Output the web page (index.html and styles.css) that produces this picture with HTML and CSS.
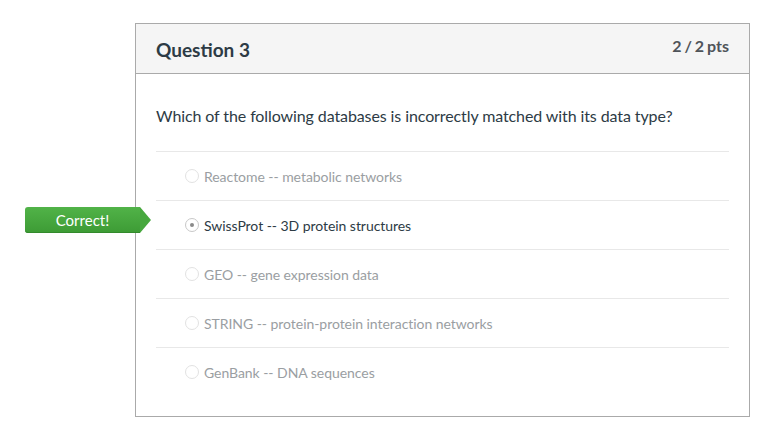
FILE: index.html
```html
<!DOCTYPE html>
<html>
<head>
<meta charset="utf-8">
<link rel="stylesheet" href="styles.css">
</head>
<body>
<div class="page">
  <div class="card">
    <div class="badge">Correct!</div>
    <div class="header">
      <h2 class="title">Question 3</h2>
      <div class="pts">2 / 2 pts</div>
    </div>
    <div class="body">
      <p class="question">Which of the following databases is incorrectly matched with its data type?</p>
      <div class="answers">
        <div class="answer"><span class="radio"></span><span class="label">Reactome -- metabolic networks</span></div>
        <div class="answer selected"><span class="radio"></span><span class="label">SwissProt -- 3D protein structures</span></div>
        <div class="answer"><span class="radio"></span><span class="label">GEO -- gene expression data</span></div>
        <div class="answer"><span class="radio"></span><span class="label">STRING -- protein-protein interaction networks</span></div>
        <div class="answer"><span class="radio"></span><span class="label">GenBank -- DNA sequences</span></div>
      </div>
    </div>
  </div>
</div>
</body>
</html>
```
FILE: styles.css
```css
html, body {
  margin: 0;
  padding: 0;
  background: #fff;
  font-family: Lato, "Liberation Sans", sans-serif;
}
.page {
  padding: 23px 0 0 135px;
}
.card {
  position: relative;
  width: 613px;
  height: 392px;
  border: 1px solid #aaaaaa;
  box-sizing: content-box;
}
.header {
  height: 49px;
  background: #f5f5f5;
  border-bottom: 1px solid #aaaaaa;
  display: flex;
  justify-content: space-between;
  align-items: flex-start;
  padding: 0 20px;
}
.title {
  margin: 0;
  padding-top: 14px;
  font-size: 19px;
  font-weight: 700;
  color: #2d3b45;
  line-height: 24px;
}
.pts {
  padding-top: 10px;
  font-size: 16px;
  font-weight: 700;
  color: #4f5459;
  line-height: 24px;
  word-spacing: -1px;
}
.body {
  padding: 0 20px;
}
.question {
  margin: 0;
  padding-top: 31px;
  height: 46px;
  font-size: 16px;
  line-height: 22px;
  color: #2d3b45;
  letter-spacing: -0.1px;
  box-sizing: content-box;
}
.answers {
  display: flex;
  flex-direction: column;
}
.answer {
  height: 49px;
  box-sizing: border-box;
  border-top: 1px solid #e8e8e8;
  display: flex;
  align-items: center;
  padding-left: 29px;
  font-size: 14px;
  letter-spacing: -0.05px;
  color: #9a9ea2;
}
.answer.selected {
  color: #2d3b45;
}
.radio {
  width: 12px;
  height: 12px;
  border: 1px solid #e2e2e2;
  border-radius: 50%;
  margin-right: 5px;
  position: relative;
  flex: none;
}
.answer.selected .radio {
  border-color: #c8c8c8;
}
.answer.selected .radio::after {
  content: "";
  position: absolute;
  left: 4px;
  top: 4px;
  width: 4px;
  height: 4px;
  border-radius: 50%;
  background: #8a8a8a;
}
.badge {
  position: absolute;
  left: -111px;
  top: 183px;
  width: 115px;
  height: 26px;
  line-height: 26px;
  text-align: center;
  font-size: 15px;
  color: #fff;
  background: linear-gradient(#51b348, #3d9b35);
  border-radius: 3px 0 0 3px;
  box-shadow: inset 0 -1px 0 #338a2c;
}
.badge::after {
  content: "";
  position: absolute;
  right: -11px;
  top: 0;
  width: 0;
  height: 0;
  border-top: 13px solid transparent;
  border-bottom: 13px solid transparent;
  border-left: 11px solid #47a83e;
}
```
